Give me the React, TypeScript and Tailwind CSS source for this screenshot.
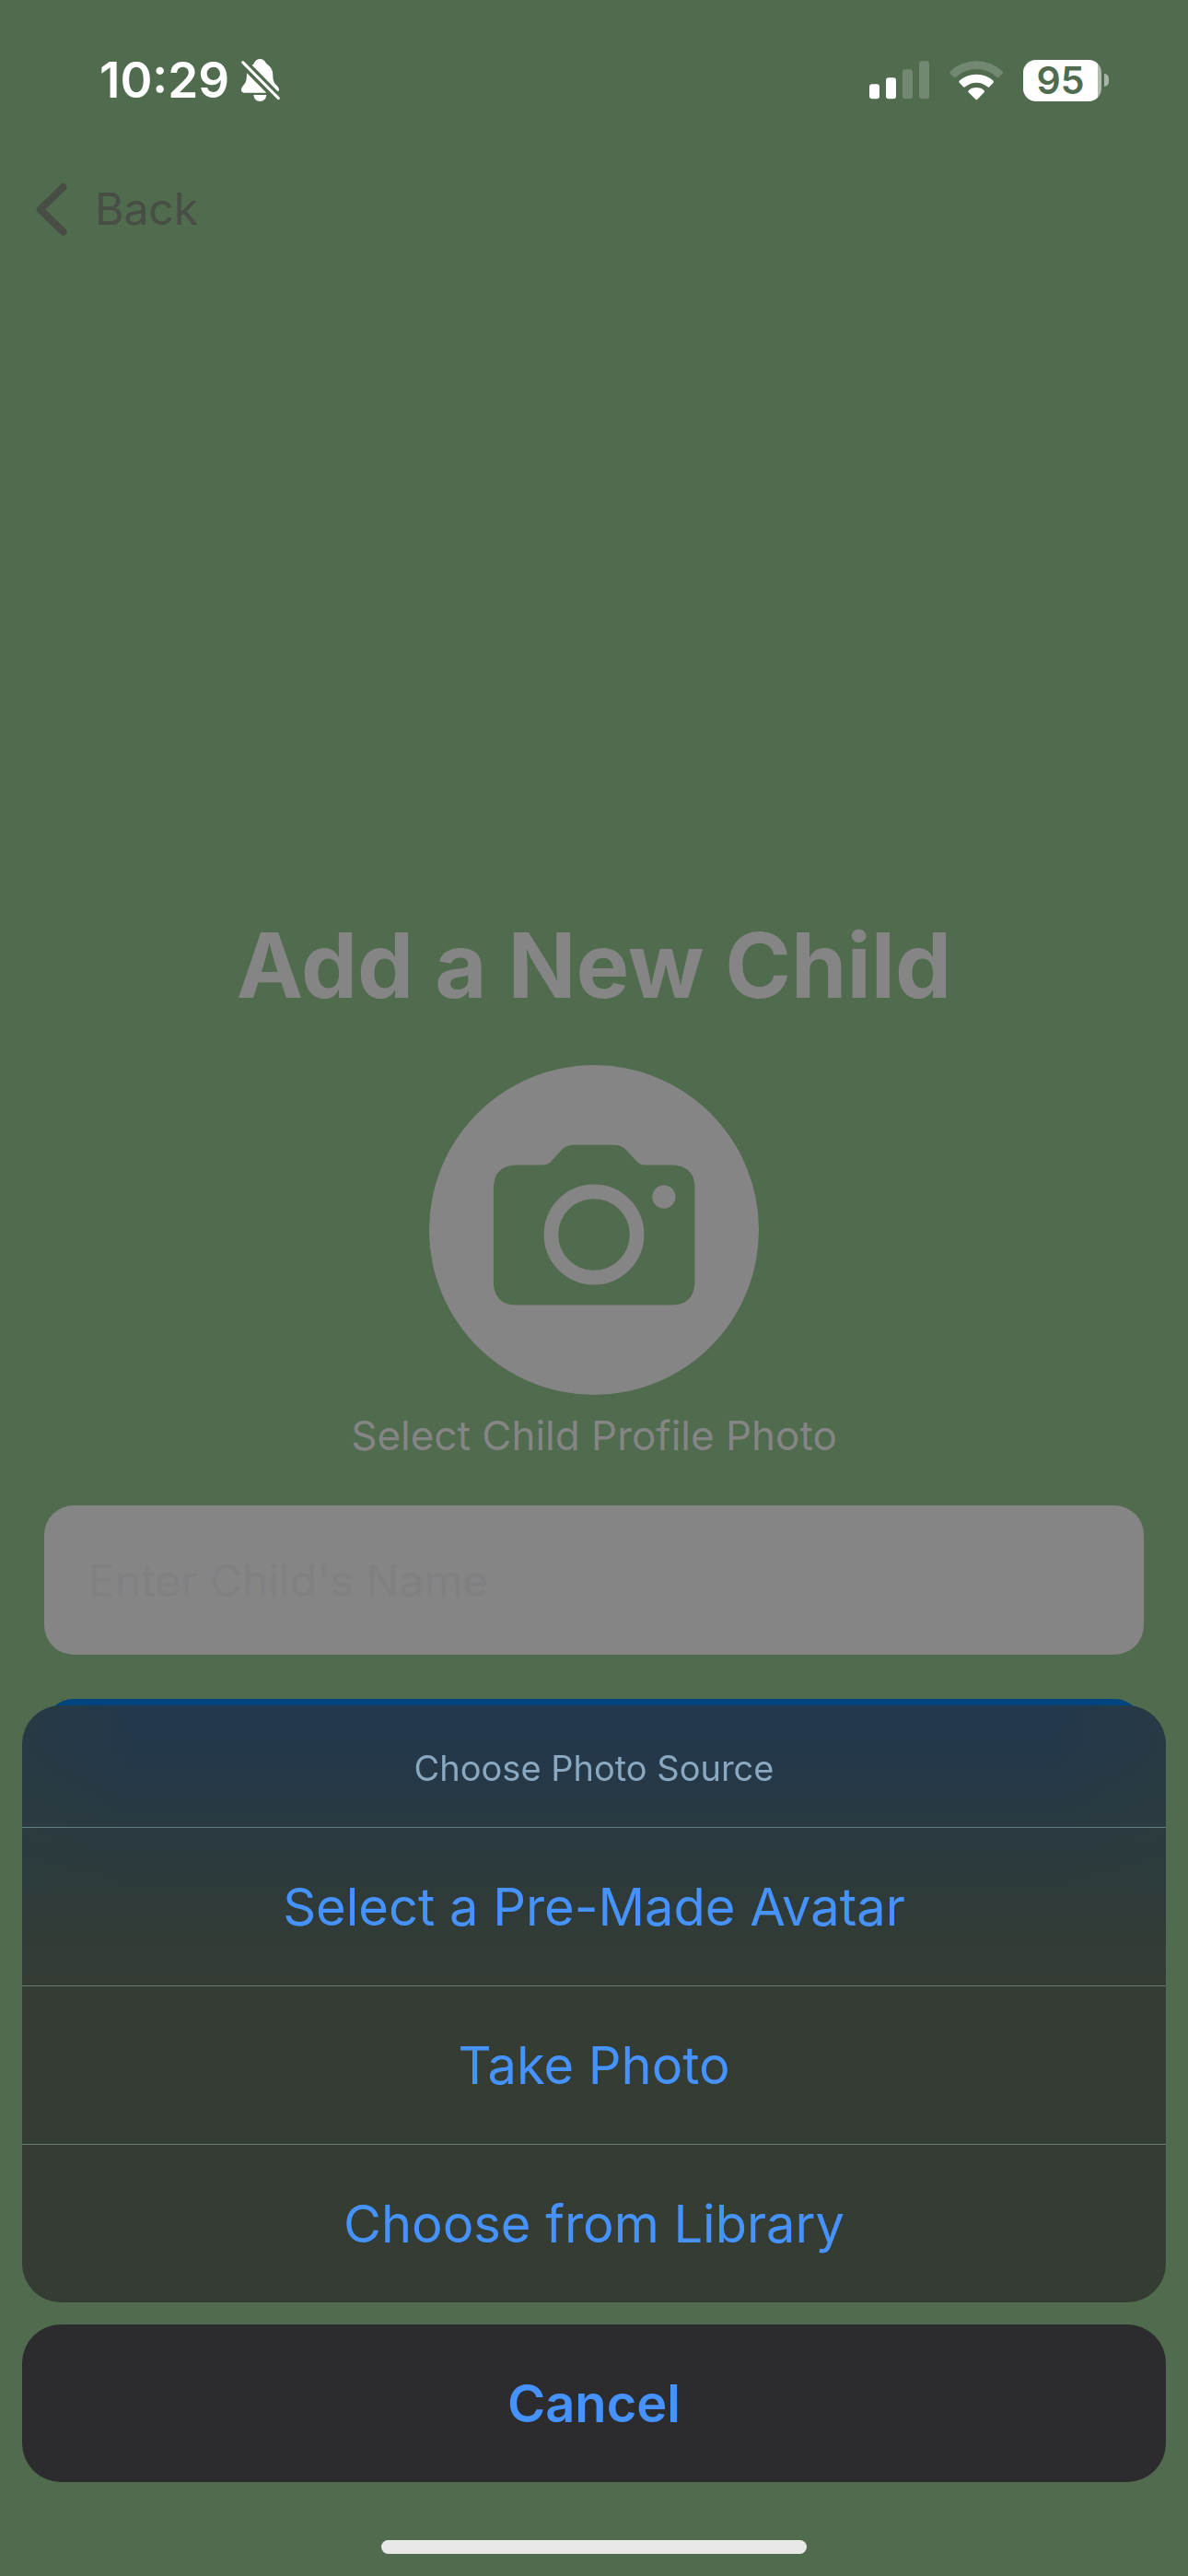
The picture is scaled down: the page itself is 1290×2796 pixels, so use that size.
const OPTIONS = [
  { label: "Select a Pre-Made Avatar", line: "border-[#5d8083]" },
  { label: "Take Photo", line: "border-[#6c7d6e]" },
  { label: "Choose from Library", line: "border-[#6c7d6e]" },
];

function BellSlash() {
  return (
    <svg viewBox="786 72 132 144" className="h-12 w-11" aria-hidden="true">
      <g fill="#fff">
        <path d="M824 95 Q830 92 832 86 Q838 75 850 75 Q862 75 868 86 Q871 92 878 96 Q892 107 892 130 Q892 150 900 157 Q912 168 912 175 Q912 180 908 181 Z" />
        <path d="M807 121 L871 185 H797 Q789 185 789 175 Q789 168 795 162 Q803 155 805 145 Q807 135 807 121 Z" />
        <path d="M829 192 H871 Q869 213 850 213 Q831 213 829 192 Z" />
      </g>
      <path d="M794 86 L910 203" stroke="#fff" strokeWidth="9" strokeLinecap="round" />
    </svg>
  );
}

function Signal() {
  return (
    <svg viewBox="129 77 195 126" className="h-[42px] w-[65px]" aria-hidden="true">
      <g fill="#fff">
        <rect x="129" y="153" width="33" height="48" rx="9" />
        <rect x="183" y="132" width="33" height="69" rx="9" />
        <rect x="237" y="105" width="33" height="96" rx="9" opacity=".2" />
        <rect x="291" y="78" width="33" height="123" rx="9" opacity=".2" />
      </g>
    </svg>
  );
}

function Wifi() {
  return (
    <svg viewBox="391 75 174 129" className="h-[43px] w-[58px]" aria-hidden="true">
      <g fill="#fff">
        <path opacity=".2" d="M393 110 Q429 76 479 76 Q529 76 564 110 Q566 114 564 116 L551 129 Q548 131 545 128 Q518 102 479 102 Q440 102 412 128 Q409 131 406 129 L393 116 Q391 113 393 110 Z" />
        <path d="M423 140 Q446 119 479 119 Q511 119 534 140 Q536 143 534 146 L521 160 Q518 162 515 160 Q500 146 479 146 Q457 146 442 160 Q439 162 436 160 L423 146 Q421 143 423 140 Z" />
        <path d="M453 172 Q463 162 479 162 Q494 162 504 172 Q506 175 504 178 L482 200 Q479 203 476 200 L453 178 Q451 175 453 172 Z" />
      </g>
    </svg>
  );
}

function Camera() {
  return (
    <svg viewBox="75 48 1076 1076" className="size-[358px]" aria-hidden="true">
      <circle cx="613" cy="586" r="538" fill="#858585" />
      <path
        fill="#506b4e"
        d="M360 374 H445 Q460 374 471 364 L506 326 Q522 309 547 309 H680 Q703 309 719 326 L753 363 Q763 374 778 374 H866 Q942 376 942 450 V755 Q940 830 868 831 H358 Q286 829 285 755 V450 Q286 376 360 374 Z"
      />
      <circle cx="613" cy="601" r="140" fill="none" stroke="#858585" strokeWidth="47" />
      <circle cx="841" cy="478" r="38" fill="#858585" />
    </svg>
  );
}

function StatusBar() {
  return (
    <header className="flex h-[174px] items-center justify-between pr-[86px] pl-[108px]">
      <div className="flex items-center gap-3 text-white">
        <span className="text-[53px] leading-[60px] font-semibold">10:29</span>
        <BellSlash />
      </div>
      <div className="flex items-center gap-[22px]">
        <Signal />
        <Wifi />
        <div className="flex items-center gap-[3px]">
          <div className="flex h-[45px] w-[85px] items-center justify-center rounded-[14px] bg-[linear-gradient(to_right,#fff_81px,#b0bdae_81px)] pr-1 text-[41px] leading-[52px] font-semibold text-[#506b4e]">
            95
          </div>
          <div className="h-[14px] w-[5px] rounded-r-full bg-[#a7b5a6]" />
        </div>
      </div>
    </header>
  );
}

export default function App() {
  return (
    <div className="min-h-screen bg-[#506b4e] font-['Inter',sans-serif]">
      <StatusBar />
      <nav className="flex h-[106px] px-[39px]">
        <button className="flex h-[106px] items-center gap-[30px] text-[48px] leading-[60px] text-[#484d46]">
          <svg viewBox="119 475 100 171" className="h-[57px] w-[34px]" aria-hidden="true">
            <path d="M207 487 L132 560 L207 633" fill="none" stroke="#484d46" strokeWidth="24" strokeLinecap="round" strokeLinejoin="round" />
          </svg>
          Back
        </button>
      </nav>
      <main className="flex flex-col items-center px-12 pt-[708px]">
        <h1 className="text-[97px] leading-[120px] font-bold text-[#858585]">Add a New Child</h1>
        <button className="mt-12 flex flex-col items-center gap-4 text-[44px] leading-[56px] text-[#858585]">
          <Camera />
          Select Child Profile Photo
        </button>
        <input
          type="text"
          aria-label="Child's name"
          placeholder="Enter Child's Name"
          className="mt-12 h-[162px] w-full rounded-[32px] bg-[#858585] px-12 text-[48px] text-[#333] placeholder:text-[#808083] placeholder:opacity-100"
        />
        <button aria-label="Add child" className="mt-12 h-[162px] w-full rounded-[32px] bg-[#004480]" />
      </main>

      <div role="dialog" aria-label="Choose Photo Source" className="fixed inset-x-0 bottom-0 flex flex-col items-center gap-6 px-6 pb-6">
        <div className="flex w-full flex-col overflow-hidden rounded-[42px] bg-[#343c34] bg-[linear-gradient(to_right,#2c3c3c80_0px,#2c3c3c00_120px,#2c3c3c00_calc(100%-120px),#2c3c3c80_100%),linear-gradient(to_bottom,#23384d_0px,#24384b_50px,#2a3a41_132px,#2e3b3b_200px,#333c35_270px,#343c34_310px)] bg-[length:100%_200px,100%_100%] bg-no-repeat text-center">
          <h2 className="pt-[42px] pb-[38px] text-[38px] leading-[52px] text-[#8ba8c1]">Choose Photo Source</h2>
          {OPTIONS.map(({ label, line }) => (
            <button key={label} className={`h-[172px] border-t text-[56px] leading-[72px] text-[#4693ff] ${line}`}>
              {label}
            </button>
          ))}
        </div>
        <button className="h-[171px] w-full rounded-[42px] bg-[#2c2c2e] text-[56px] leading-[72px] font-semibold text-[#4693ff]">
          Cancel
        </button>
        <div className="mt-[39px] h-[15px] w-[462px] rounded-full bg-[#e8e8e8]" />
      </div>
    </div>
  );
}
